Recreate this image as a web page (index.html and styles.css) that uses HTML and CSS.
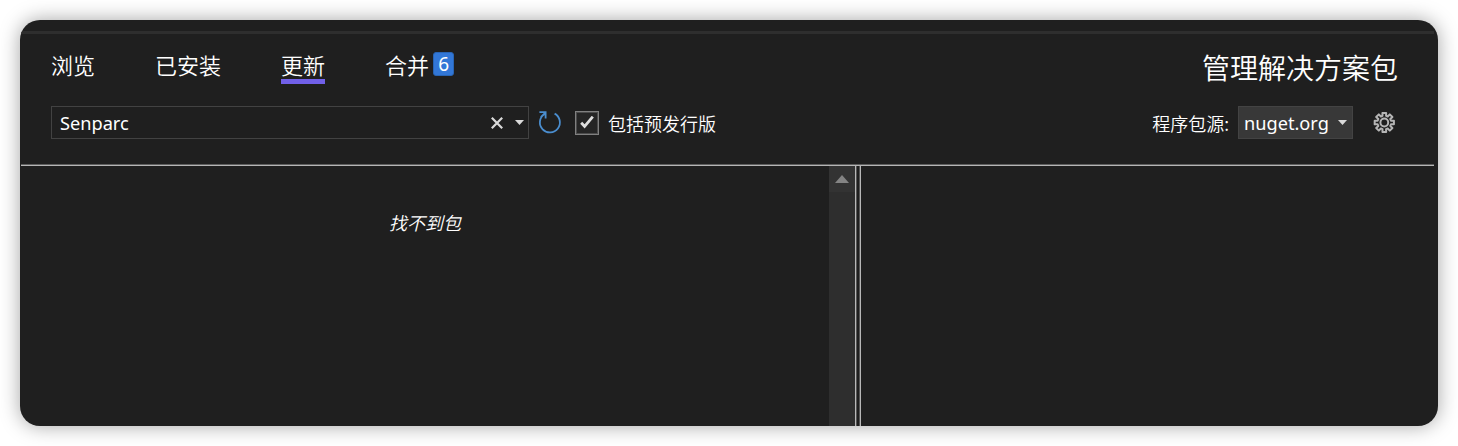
FILE: index.html
```html
<!DOCTYPE html>
<html lang="zh-CN">
<head>
<meta charset="utf-8">
<title>管理解决方案包</title>
<link rel="stylesheet" href="styles.css">
</head>
<body>
<div class="window">
  <div class="top-edge"></div>
  <header class="header">
    <div class="title-row">
      <nav class="tabs">
        <a class="tab">浏览</a>
        <a class="tab">已安装</a>
        <a class="tab active">更新</a>
        <a class="tab">合并<span class="badge">6</span></a>
      </nav>
      <h1 class="title">管理解决方案包</h1>
    </div>
    <div class="toolbar">
      <div class="search">
        <span class="search-text">Senparc</span>
        <svg class="clear" width="12" height="12" viewBox="0 0 12 12"><path d="M.8.8 11.2 11.2M11.2.8.8 11.2"/></svg>
        <svg class="arrow" width="9" height="5" viewBox="0 0 9 5"><path d="M0 0H9L4.5 5Z"/></svg>
      </div>
      <svg class="refresh" width="24" height="24" viewBox="0 0 24 24"><path d="M16.6 2.6A10 10 0 1 1 6.2 3.2M1.4 1.2H7.6V7.4M7.4 1.6 2.8 6.2"/></svg>
      <span class="checkbox"><svg width="14" height="13" viewBox="0 0 14 13"><path d="M1.2 6.7 4.6 10.3 12.8.7"/></svg></span>
      <span class="label">包括预发行版</span>
      <span class="label source-label">程序包源:</span>
      <div class="select"><span>nuget.org</span><svg class="arrow" width="9" height="5" viewBox="0 0 9 5"><path d="M0 0H9L4.5 5Z"/></svg></div>
      <svg class="gear" width="24" height="24" viewBox="-12.3 -11.5 24 24"><path d="M-1.79-6.66-1.87-9.62H1.87L1.79-6.66 3.44-5.97 5.48-8.12 8.12-5.48 5.97-3.44 6.66-1.79 9.62-1.87V1.87L6.66 1.79 5.97 3.44 8.12 5.48 5.48 8.12 3.44 5.97 1.79 6.66 1.87 9.62H-1.87L-1.79 6.66-3.44 5.97-5.48 8.12-8.12 5.48-5.97 3.44-6.66 1.79-9.62 1.87V-1.87L-6.66-1.79-5.97-3.44-8.12-5.48-5.48-8.12-3.44-5.97Z"/><circle r="3.9"/></svg>
    </div>
  </header>
  <main class="content">
    <section class="list"><p class="empty">找不到包</p></section>
    <div class="scrollbar"><div class="scroll-button"><svg width="14" height="8" viewBox="0 0 14 8"><path d="M7 0 14 8H0Z"/></svg></div></div>
    <div class="splitter"></div>
    <section class="details"></section>
  </main>
</div>
</body>
</html>
```
FILE: styles.css
```css
* { box-sizing: border-box; }
body {
  margin: 0;
  padding: 20px;
  height: 446px;
  overflow: hidden;
  background: #fff;
  color: #fff;
  font-family: "Noto Sans", "Noto Sans CJK SC", sans-serif;
}
.window {
  display: flex;
  flex-direction: column;
  height: 406px;
  overflow: hidden;
  border-radius: 20px;
  background: #1f1f1f;
  box-shadow: 0 0 20px rgba(0, 0, 0, .36);
}
svg { display: block; flex: none; }
.top-edge { height: 14px; margin-right: 4px; border-bottom: 3px solid #2e2e2e; }
.header {
  height: 132px;
  margin: 0 4px 0 1px;
  padding: 16px 36px 0 30px;
  border-bottom: 1px solid #b5b5b5;
  box-shadow: inset 0 -1px #5e5e5e;
}
.title-row { display: flex; justify-content: space-between; height: 56px; }
.tabs { display: flex; gap: 60px; }
.tab {
  display: flex;
  height: 34px;
  font-family: "Noto Sans CJK SC", sans-serif;
  font-size: 22px;
  font-weight: 350;
  line-height: 28px;
}
.active { border-bottom: 5px solid #7160e8; }
.badge {
  width: 21px;
  height: 24px;
  margin: 2px 0 0 4px;
  border: 1px solid #2864b4;
  border-radius: 3px;
  background: #3277d7;
  font-family: "Noto Sans", sans-serif;
  font-size: 19px;
  font-weight: 400;
  line-height: 22px;
  text-align: center;
}
.title {
  margin: 0;
  font-family: "Noto Sans CJK SC", sans-serif;
  font-size: 28px;
  font-weight: 350;
  line-height: 34px;
}
.toolbar { display: flex; align-items: center; height: 33px; }
.search {
  display: flex;
  align-items: center;
  width: 478px;
  height: 33px;
  padding: 0 4px 0 8px;
  border: 1px solid #424242;
  font-size: 18.2px;
}
.search-text { margin-right: auto; }
.clear { margin-right: 12px; fill: none; stroke: #dadada; stroke-width: 2.2; }
.arrow { fill: #dadada; }
.refresh { margin-left: 9px; fill: none; stroke: #4a8dce; stroke-width: 1.8; }
.checkbox {
  display: grid;
  place-items: center;
  width: 24px;
  height: 24px;
  margin: 0 9px 0 13px;
  border: 1px solid #808080;
  box-shadow: inset 0 0 0 1px #4c4c4c;
  background: #252525;
}
.checkbox path { fill: none; stroke: #dedede; stroke-width: 2.8; }
.label {
  font-family: "Noto Sans CJK SC", sans-serif;
  font-size: 18px;
  font-weight: 350;
  line-height: 24px;
}
.source-label { margin-left: auto; }
.select {
  display: flex;
  align-items: center;
  justify-content: space-between;
  width: 115px;
  height: 33px;
  margin: 0 19px 0 9px;
  padding: 0 5px;
  border: 1px solid #434343;
  background: #383838;
  font-size: 18.2px;
}
.gear { margin-right: 2px; fill: none; stroke: #b4b4b4; stroke-width: 2; stroke-linejoin: round; }
.content { display: flex; flex: 1; min-height: 0; }
.list { width: 809px; padding-top: 44px; }
.empty {
  margin: 0;
  padding-left: 1px;
  font-family: "Noto Sans CJK SC", sans-serif;
  font-size: 18px;
  font-style: italic;
  font-weight: 350;
  line-height: 24px;
  text-align: center;
}
.scrollbar { width: 26px; background: #2e2e2e; }
.scroll-button { display: grid; place-items: center; height: 26px; background: #333; }
.scroll-button path { fill: #848484; }
.splitter {
  width: 6px;
  border: solid #b8b8b8;
  border-width: 0 1px;
  box-shadow: inset 1px 0 #555, inset -1px 0 #555;
}
.details { flex: 1; }
```
